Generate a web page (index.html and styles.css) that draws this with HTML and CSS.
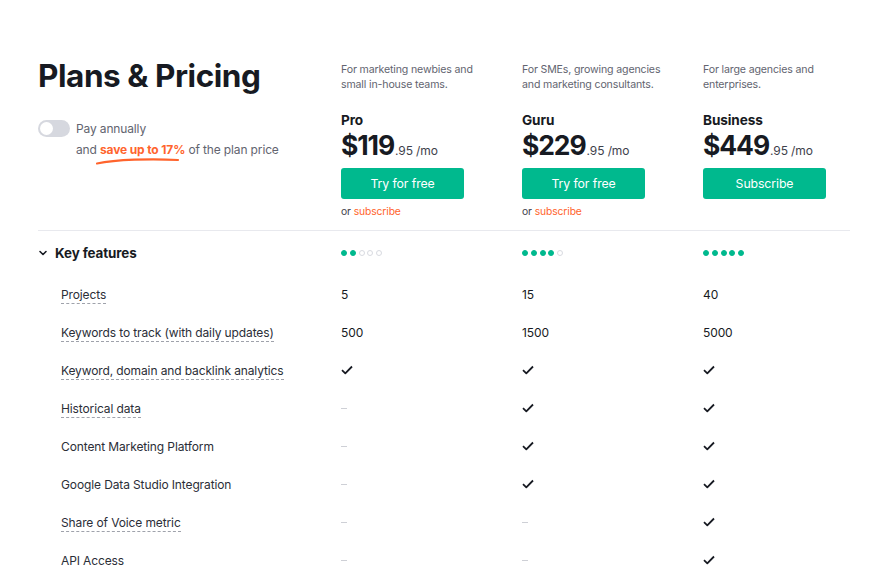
FILE: index.html
```html
<!DOCTYPE html>
<html lang="en">
<head>
<meta charset="utf-8">
<title>Plans &amp; Pricing</title>
<link rel="stylesheet" href="styles.css">
</head>
<body>
<div class="page">
  <header class="head">
    <div class="intro">
      <h1 class="title">Plans &amp; Pricing</h1>
      <div class="billing">
        <span class="toggle"><span class="knob"></span></span>
        <div class="billing-text">
          <div class="billing-line">Pay annually</div>
          <div class="billing-line">and <span class="save">save up to 17%<svg class="swoosh" width="84" height="8" viewBox="0 0 84 8"><path d="M1 6.5 C 20 2.5, 55 1.5, 82 3" fill="none" stroke="#ff642d" stroke-width="2.2" stroke-linecap="round"/></svg></span> of the plan price</div>
        </div>
      </div>
    </div>

    <div class="plan">
      <p class="desc">For marketing newbies and small in-house teams.</p>
      <div class="name">Pro</div>
      <div class="price"><span class="amount">$119</span><span class="cents">.95 /mo</span></div>
      <button class="btn">Try for free</button>
      <div class="alt">or <span class="alt-link">subscribe</span></div>
    </div>

    <div class="plan">
      <p class="desc">For SMEs, growing agencies and marketing consultants.</p>
      <div class="name">Guru</div>
      <div class="price"><span class="amount">$229</span><span class="cents">.95 /mo</span></div>
      <button class="btn">Try for free</button>
      <div class="alt">or <span class="alt-link">subscribe</span></div>
    </div>

    <div class="plan">
      <p class="desc">For large agencies and enterprises.</p>
      <div class="name">Business</div>
      <div class="price"><span class="amount">$449</span><span class="cents">.95 /mo</span></div>
      <button class="btn">Subscribe</button>
    </div>
  </header>

  <section class="features">
    <div class="row group">
      <div class="group-title">
        <svg class="chev" width="10" height="10" viewBox="0 0 10 10"><path d="M2 3.5 L5 6.5 L8 3.5" fill="none" stroke="#171a22" stroke-width="1.6" stroke-linecap="round" stroke-linejoin="round"/></svg>
        Key features
      </div>
      <div class="cell"><span class="dots"><i class="dot on"></i><i class="dot on"></i><i class="dot"></i><i class="dot"></i><i class="dot"></i></span></div>
      <div class="cell"><span class="dots"><i class="dot on"></i><i class="dot on"></i><i class="dot on"></i><i class="dot on"></i><i class="dot"></i></span></div>
      <div class="cell"><span class="dots"><i class="dot on"></i><i class="dot on"></i><i class="dot on"></i><i class="dot on"></i><i class="dot on"></i></span></div>
    </div>

    <div class="row">
      <div class="label"><span class="hint">Projects</span></div>
      <div class="cell">5</div><div class="cell">15</div><div class="cell">40</div>
    </div>
    <div class="row">
      <div class="label"><span class="hint">Keywords to track (with daily updates)</span></div>
      <div class="cell">500</div><div class="cell">1500</div><div class="cell">5000</div>
    </div>
    <div class="row">
      <div class="label"><span class="hint">Keyword, domain and backlink analytics</span></div>
      <div class="cell"><svg class="check" viewBox="0 0 12 10"><path d="M1 5.2 L4.3 8.3 L11 1.5" fill="none" stroke="#171a22" stroke-width="1.8" stroke-linejoin="round"/></svg></div>
      <div class="cell"><svg class="check" viewBox="0 0 12 10"><path d="M1 5.2 L4.3 8.3 L11 1.5" fill="none" stroke="#171a22" stroke-width="1.8" stroke-linejoin="round"/></svg></div>
      <div class="cell"><svg class="check" viewBox="0 0 12 10"><path d="M1 5.2 L4.3 8.3 L11 1.5" fill="none" stroke="#171a22" stroke-width="1.8" stroke-linejoin="round"/></svg></div>
    </div>
    <div class="row">
      <div class="label"><span class="hint">Historical data</span></div>
      <div class="cell"><span class="dash"></span></div>
      <div class="cell"><svg class="check" viewBox="0 0 12 10"><path d="M1 5.2 L4.3 8.3 L11 1.5" fill="none" stroke="#171a22" stroke-width="1.8" stroke-linejoin="round"/></svg></div>
      <div class="cell"><svg class="check" viewBox="0 0 12 10"><path d="M1 5.2 L4.3 8.3 L11 1.5" fill="none" stroke="#171a22" stroke-width="1.8" stroke-linejoin="round"/></svg></div>
    </div>
    <div class="row">
      <div class="label">Content Marketing Platform</div>
      <div class="cell"><span class="dash"></span></div>
      <div class="cell"><svg class="check" viewBox="0 0 12 10"><path d="M1 5.2 L4.3 8.3 L11 1.5" fill="none" stroke="#171a22" stroke-width="1.8" stroke-linejoin="round"/></svg></div>
      <div class="cell"><svg class="check" viewBox="0 0 12 10"><path d="M1 5.2 L4.3 8.3 L11 1.5" fill="none" stroke="#171a22" stroke-width="1.8" stroke-linejoin="round"/></svg></div>
    </div>
    <div class="row">
      <div class="label">Google Data Studio Integration</div>
      <div class="cell"><span class="dash"></span></div>
      <div class="cell"><svg class="check" viewBox="0 0 12 10"><path d="M1 5.2 L4.3 8.3 L11 1.5" fill="none" stroke="#171a22" stroke-width="1.8" stroke-linejoin="round"/></svg></div>
      <div class="cell"><svg class="check" viewBox="0 0 12 10"><path d="M1 5.2 L4.3 8.3 L11 1.5" fill="none" stroke="#171a22" stroke-width="1.8" stroke-linejoin="round"/></svg></div>
    </div>
    <div class="row">
      <div class="label"><span class="hint">Share of Voice metric</span></div>
      <div class="cell"><span class="dash"></span></div>
      <div class="cell"><span class="dash"></span></div>
      <div class="cell"><svg class="check" viewBox="0 0 12 10"><path d="M1 5.2 L4.3 8.3 L11 1.5" fill="none" stroke="#171a22" stroke-width="1.8" stroke-linejoin="round"/></svg></div>
    </div>
    <div class="row">
      <div class="label">API Access</div>
      <div class="cell"><span class="dash"></span></div>
      <div class="cell"><span class="dash"></span></div>
      <div class="cell"><svg class="check" viewBox="0 0 12 10"><path d="M1 5.2 L4.3 8.3 L11 1.5" fill="none" stroke="#171a22" stroke-width="1.8" stroke-linejoin="round"/></svg></div>
    </div>
  </section>
</div>
</body>
</html>
```

FILE: styles.css
```css
* { box-sizing: border-box; }

html, body {
  margin: 0;
  padding: 0;
  background: #ffffff;
  overflow: hidden;
}

body {
  font-family: Inter, "Noto Sans", "Liberation Sans", sans-serif;
  color: #171a22;
}

.page {
  width: 875px;
  padding: 0 25px 0 38px;
}

.head {
  display: grid;
  grid-template-columns: 303px 181px 181px 147px;
  padding-top: 62px;
  padding-bottom: 11px;
  border-bottom: 1px solid #e8e9ee;
}

.title {
  margin: 0;
  font-size: 31.5px;
  line-height: 28px;
  font-weight: 700;
  letter-spacing: -0.45px;
  color: #171a22;
}

.billing {
  display: flex;
  align-items: flex-start;
  gap: 6px;
  margin-top: 28px;
}

.toggle {
  width: 32px;
  height: 17px;
  border-radius: 9px;
  background: #d6d8df;
  position: relative;
  flex: none;
  margin-top: 2px;
}

.knob {
  position: absolute;
  left: 2px;
  top: 2px;
  width: 13px;
  height: 13px;
  border-radius: 50%;
  background: #ffffff;
}

.billing-text {
  font-size: 12px;
  line-height: 21px;
  letter-spacing: -0.14px;
  color: #62646f;
}

.save {
  position: relative;
  color: #ff642d;
  font-weight: 700;
}

.swoosh {
  position: absolute;
  left: -4px;
  top: 15px;
}

.plan {
  display: flex;
  flex-direction: column;
}

.desc {
  margin: 0;
  font-size: 10.6px;
  line-height: 15px;
  letter-spacing: -0.15px;
  color: #62646f;
  width: 150px;
  height: 30px;
}

.name {
  margin-top: 19px;
  font-size: 13.6px;
  line-height: 18px;
  font-weight: 700;
  letter-spacing: -0.1px;
}

.price {
  display: flex;
  align-items: baseline;
  margin-top: 1px;
  height: 30px;
}

.amount {
  font-size: 26.5px;
  line-height: 30px;
  font-weight: 700;
  letter-spacing: -1.1px;
}

.cents {
  font-size: 12px;
  color: #3e414b;
  margin-left: 1px;
  letter-spacing: -0.1px;
}

.btn {
  margin-top: 8px;
  width: 123px;
  height: 31px;
  border: 0;
  border-radius: 3px;
  background: #00b98e;
  color: #ffffff;
  font-family: inherit;
  font-size: 12.3px;
  letter-spacing: -0.1px;
  padding: 0;
}

.alt {
  margin-top: 5px;
  font-size: 10.3px;
  line-height: 15px;
  letter-spacing: -0.1px;
  color: #3e414b;
}

.alt-link {
  color: #ff642d;
}

.row {
  display: grid;
  grid-template-columns: 303px 181px 181px 147px;
  align-items: center;
  height: 38px;
  font-size: 12px;
  letter-spacing: -0.12px;
  color: #171a22;
}

.row.group {
  height: 44px;
}

.group-title {
  display: flex;
  align-items: center;
  gap: 7px;
  font-size: 13.4px;
  font-weight: 700;
  letter-spacing: -0.1px;
}

.chev { flex: none; }

.label {
  padding-left: 23px;
  color: #2b2e37;
}

.hint {
  border-bottom: 1px dashed #9fa2ab;
  padding-bottom: 1px;
}

.dots {
  display: flex;
  gap: 2.8px;
  align-items: center;
}

.dot {
  width: 6px;
  height: 6px;
  border-radius: 50%;
  border: 1px solid #d8dae0;
  display: block;
}

.dot.on {
  background: #00b98e;
  border-color: #00b98e;
}

.check {
  width: 12px;
  height: 10px;
  display: block;
}

.dash {
  display: block;
  width: 6px;
  height: 1px;
  background: #ced0d6;
}
```
